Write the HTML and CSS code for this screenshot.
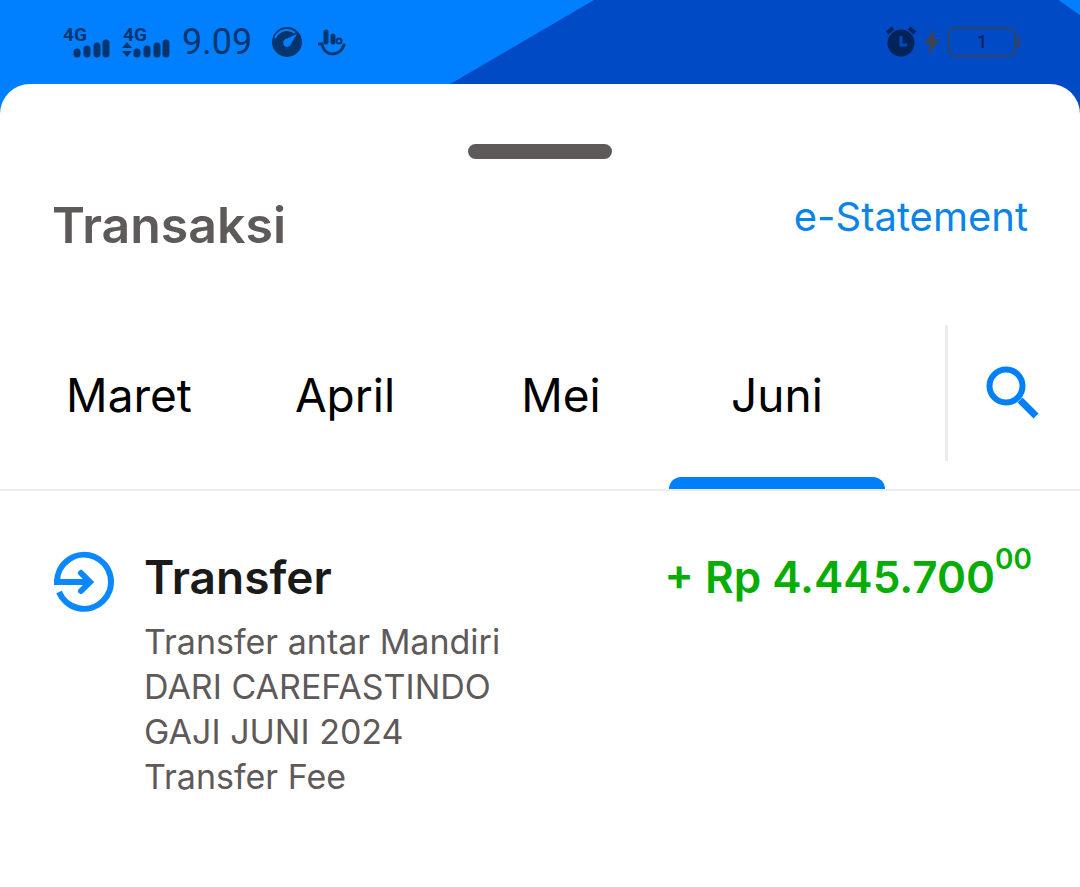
FILE: index.html
```html
<!DOCTYPE html>
<html lang="id">
<head>
  <meta charset="UTF-8">
  <meta name="viewport" content="width=device-width, initial-scale=1.0">
  <title>Transaksi</title>
  <link rel="stylesheet" href="styles.css">
</head>
<body>

<header class="status-bar">
  <div class="status-left">
    <svg class="signal" width="48" height="42" viewBox="0 0 48 42" role="img" aria-label="4G">
      <text class="network" x="1" y="20">4G</text>
      <g class="bars">
        <path d="M15 31v2M25 28v5M35 25v8M44 22v11"/>
      </g>
    </svg>
    <svg class="signal" width="48" height="42" viewBox="0 0 48 42" role="img" aria-label="4G">
      <text class="network" x="1" y="20">4G</text>
      <path class="solid" d="M5 21l5 6H0zM0 30h10l-5 6z"/>
      <g class="bars">
        <path d="M15 31v2M25 28v5M35 25v8M44 22v11"/>
      </g>
    </svg>
    <span class="clock">9.09</span>
    <svg class="gauge" width="30" height="30" viewBox="0 0 30 30">
      <circle class="solid" cx="15" cy="15" r="15"/>
      <path class="gauge-line" d="M3 11C7 2 17 1 23 6"/>
      <path class="gauge-hand" d="M25 7L19 17a4 4 0 1 1-5-5z"/>
    </svg>
    <svg class="hand" width="28" height="28" viewBox="0 0 28 28">
      <path class="finger" d="M8 4v10M15 8v6"/>
      <circle class="ring" cx="21" cy="13" r="2.5"/>
      <path class="smile" d="M1 16h3C6 29 22 29 26 17"/>
    </svg>
  </div>
  <div class="status-right">
    <svg width="30" height="32" viewBox="0 0 30 32">
      <circle class="alarm" cx="15" cy="17" r="13.5"/>
      <path class="alarm-bell" d="M1 7l6-5M29 7l-6-5"/>
      <path class="alarm-hand" d="M15 10v9h6"/>
    </svg>
    <svg width="18" height="28" viewBox="0 0 18 28">
      <path class="bolt" d="M11 1L1 16h6L5 27 17 11h-6z"/>
    </svg>
    <span class="battery">1</span>
  </div>
</header>

<main class="sheet">
  <div class="handle"></div>

  <div class="title-row">
    <h1>Transaksi</h1>
    <a href="#">e-Statement</a>
  </div>

  <nav class="months">
    <div class="tabs">
      <button type="button">Maret</button>
      <button type="button">April</button>
      <button type="button">Mei</button>
      <button type="button" class="active">Juni</button>
    </div>
    <button type="button" class="search" aria-label="Cari">
      <svg width="56" height="54" viewBox="0 0 56 54">
        <circle cx="20" cy="20" r="16.5"/>
        <path class="search-grip" d="M34 34l16 16"/>
      </svg>
    </button>
  </nav>

  <!-- Transaction list -->
  <article class="transaction">
    <svg class="transfer-icon" width="62" height="62" viewBox="0 0 62 62">
      <path d="M4 31A27 27 0 1 1 6 41M1 31h35"/>
      <path class="arrow-head" d="M28 22l9 9-9 9"/>
    </svg>
    <div class="detail">
      <div class="detail-head">
        <h2>Transfer</h2>
        <div class="amount">+ Rp 4.445.700<sup>00</sup></div>
      </div>
      <p>Transfer antar Mandiri<br>DARI CAREFASTINDO<br>GAJI JUNI 2024<br>Transfer Fee</p>
    </div>
  </article>
</main>

</body>
</html>
```
FILE: styles.css
```css
body {
  font-family: Inter, 'Liberation Sans', sans-serif;
  background-color: #fff;
  margin: 0;
}

h1, h2, p {
  margin: 0;
}

button {
  font: inherit;
  background: none;
  border: 0;
  padding: 0;
}

.status-bar {
  position: relative;
  display: flex;
  justify-content: space-between;
  box-sizing: border-box;
  height: 120px;
  padding: 0 64px 36px 62px;
  background-color: #0080ff;
}

/* Darker diagonal band */
.status-bar::before {
  content: '';
  position: absolute;
  inset: 0;
  background-color: #004bc5;
  clip-path: polygon(55% 0, 98% 0, 100% 15px, 100% 100%, 36% 100%);
}

.status-left,
.status-right {
  position: relative;
  display: flex;
  align-items: center;
  color: #04356f;
}

.signal {
  margin-right: 12px;
}

.network {
  font: 700 19px Roboto, sans-serif;
  fill: #04356f;
}

.solid {
  fill: #04356f;
}

.bars {
  fill: none;
  stroke: #04356f;
  stroke-width: 7;
  stroke-linecap: round;
}

.clock {
  font: 400 36px Roboto, sans-serif;
}

.gauge {
  margin: 0 16px 0 20px;
}

.gauge-line {
  fill: none;
  stroke: #0080ff;
  stroke-width: 2;
}

.gauge-hand {
  fill: #0080ff;
}

.finger,
.ring,
.smile {
  fill: none;
  stroke: #04356f;
  stroke-width: 2;
  stroke-linecap: round;
}

.finger {
  stroke-width: 5;
}

.smile {
  stroke-width: 3;
}

.status-right {
  gap: 7px;
}

.alarm {
  fill: #042457;
}

.alarm-bell {
  fill: none;
  stroke: #042457;
  stroke-width: 4;
}

.alarm-hand {
  fill: none;
  stroke: #004bc5;
  stroke-width: 3;
}

.bolt {
  fill: #3c4355;
}

.battery {
  position: relative;
  box-sizing: border-box;
  width: 68px;
  height: 30px;
  border: 2px solid #2d4468;
  border-radius: 7px;
  font: 500 18px/26px Roboto, sans-serif;
  text-align: center;
  color: #042457;
}

.battery::after {
  content: '';
  position: absolute;
  top: 7px;
  right: -6px;
  width: 3px;
  height: 12px;
  background-color: #2d4468;
}

.sheet {
  position: relative;
  margin-top: -36px;
  padding-top: 60px;
  background-color: #fff;
  border-radius: 30px 30px 0 0;
}

.handle {
  width: 144px;
  height: 15px;
  margin: 0 auto;
  border-radius: 8px;
  background-color: #5f5a5a;
}

.title-row {
  display: flex;
  justify-content: space-between;
  padding: 32px 52px 0;
}

h1 {
  font-size: 50px;
  line-height: 68px;
  font-weight: 600;
  color: #5f5a5a;
}

.title-row a {
  font-size: 40px;
  line-height: 52px;
  color: #0a84e8;
  text-decoration: none;
}

.months {
  display: flex;
  margin-top: 66px;
  border-bottom: 2px solid #ececec;
}

.tabs {
  flex: 1;
  display: flex;
  height: 164px;
  padding: 0 60px 0 21px;
}

.tabs button {
  position: relative;
  flex: 1;
  padding-bottom: 24px;
  font-size: 46px;
  color: #000;
}

.tabs .active::after {
  content: '';
  position: absolute;
  right: 0;
  bottom: 0;
  left: 0;
  height: 12px;
  border-radius: 12px 12px 0 0;
  background-color: #0080f8;
}

.search {
  box-sizing: border-box;
  width: 135px;
  height: 136px;
  border-left: 3px solid #ececec;
}

.search svg {
  display: block;
  margin: 0 auto;
  fill: none;
  stroke: #0080f8;
  stroke-width: 6;
}

.search .search-grip {
  stroke-width: 7;
}

.transaction {
  display: flex;
  gap: 29px;
  padding: 54px 48px 60px 53px;
}

.transfer-icon {
  flex: none;
  margin-top: 6px;
  fill: none;
  stroke: #0a88fc;
  stroke-width: 6;
}

.arrow-head {
  stroke-linecap: round;
}

.detail {
  flex: 1;
}

.detail-head {
  display: flex;
  justify-content: space-between;
  margin-bottom: 10px;
  line-height: 64px;
}

h2 {
  font-size: 46px;
  font-weight: 600;
  color: #1a1a1a;
}

.amount {
  font-size: 44px;
  font-weight: 600;
  color: #05ad05;
}

.amount sup {
  font-size: 28px;
  line-height: 0;
  vertical-align: 24px;
}

.detail p {
  font-size: 34px;
  line-height: 45px;
  color: #5f5a5a;
}
```
